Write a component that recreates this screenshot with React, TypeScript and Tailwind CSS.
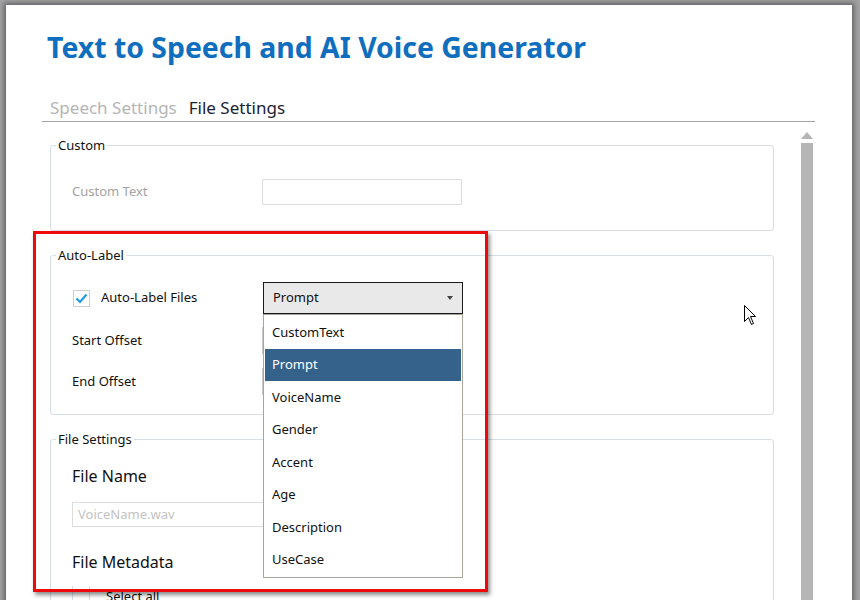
const items = ["CustomText", "Prompt", "VoiceName", "Gender", "Accent", "Age", "Description", "UseCase"];

function Group({ title, className, children }: { title: string; className?: string; children: React.ReactNode }) {
  return (
    <fieldset className={`w-[724px] rounded-[3px] border border-[#d6dee6] ${className ?? ""}`}>
      <legend className="ml-[5px] px-[2px] text-[13px] leading-[16px] text-[#111]">{title}</legend>
      {children}
    </fieldset>
  );
}

function Cursor() {
  return (
    <svg width="13" height="21" viewBox="0 0 13 21" className="absolute left-[744px] top-[305px]">
      <path d="M0.5 0.5 L0.5 16.5 L4.5 12.5 L7.5 19.5 L9.5 18.5 L6.5 11.5 L11.5 11.5 Z" fill="#fff" stroke="#000" strokeWidth="1" />
    </svg>
  );
}

export default function App() {
  return (
    <div className="relative h-[600px] w-[860px] overflow-hidden bg-[#a3a3a3]" style={{ fontFamily: '"Noto Sans", sans-serif' }}>
      <div className="ml-[6px] mt-[5px] h-[600px] w-[846px] overflow-hidden bg-white shadow-[0_0_5px_2px_rgba(40,40,50,0.55)]">
        <h1 className="pl-[41px] pt-[25px] text-[28.4px] font-bold leading-[34px] text-[#106ebe]">Text to Speech and AI Voice Generator</h1>

        <div className="mt-[32px] flex gap-[12px] pl-[44px] text-[17px] leading-[24px]">
          <span className="text-[#b5b5b5]">Speech Settings</span>
          <span className="text-[#1a2233]">File Settings</span>
        </div>
        <div className="ml-[36px] mt-[1px] h-px w-[773px] bg-[#a3a3a3]" />

        <div className="ml-[36px] flex">
          <div className="w-[732px] pl-[8px] pt-[15px]">
            <Group title="Custom">
              <div className="flex items-center pb-[25px] pl-[21px] pt-[26px]">
                <span className="w-[190px] text-[13px] text-[#a3a3a3]">Custom Text</span>
                <div className="h-[26px] w-[200px] border border-[#dddddd]" />
              </div>
            </Group>

            <Group title="Auto-Label" className="mt-[16px]">
              <div className="pb-[19px] pl-[22px] pt-[19px] text-[13px] text-[#111]">
                <div className="flex h-[32px] items-center">
                  <div className="flex h-[17px] w-[17px] items-center justify-center border border-[#cfcfcf]">
                    <svg width="13" height="11" viewBox="0 0 13 11">
                      <path d="M1.5 5.5 L5 9 L11.5 1.5" fill="none" stroke="#1c9be0" strokeWidth="2.2" />
                    </svg>
                  </div>
                  <span className="ml-[11px] w-[161px]">Auto-Label Files</span>
                  <div className="relative z-10 ml-[1px] h-[32px] w-[200px]">
                    <div className="flex h-full items-center justify-between border border-[#1a1a1a] bg-[#e9e9e9] pl-[9px] pr-[9px]">
                      <span>Prompt</span>
                      <svg width="6" height="4" viewBox="0 0 6 4"><path d="M0 0 L6 0 L3 4 Z" fill="#444" /></svg>
                    </div>
                    <div className="absolute left-0 top-full w-[200px] border border-[#aaa59b] bg-white p-[1px]">
                      {items.map((it) => (
                        <div
                          key={it}
                          className={`flex h-[32.5px] items-center pl-[7px] ${it === "Prompt" ? "bg-[#34628b] text-white" : "text-[#111]"}`}
                        >
                          {it}
                        </div>
                      ))}
                    </div>
                  </div>
                </div>
                <div className="mt-[13px] flex h-[27px] items-center">
                  <span className="ml-[-1px] w-[190px]">Start Offset</span>
                  <div className="h-[27px] w-[200px] border border-[#c8c8c8]" />
                </div>
                <div className="mt-[14px] flex h-[27px] items-center">
                  <span className="ml-[-1px] w-[190px]">End Offset</span>
                  <div className="h-[27px] w-[200px] border border-[#c8c8c8]" />
                </div>
              </div>
            </Group>

            <Group title="File Settings" className="mt-[16px] h-[200px]">
              <div className="pl-[21px] pt-[18px] text-[#111]">
                <div className="text-[16px] leading-[22px]">File Name</div>
                <div className="mt-[15px] flex h-[25px] w-[390px] items-center border border-[#dddddd] pl-[5px] text-[13px] text-[#c3c3c3]">
                  VoiceName.wav
                </div>
                <div className="mt-[24px] text-[16px] leading-[22px]">File Metadata</div>
                <div className="mt-[13px] flex h-[40px] w-[390px] border-l border-[#d6dee6]">
                  <div className="w-[17px] border-r border-[#d6dee6]" />
                  <span className="pl-[16px] pt-[1px] text-[13px]">Select all</span>
                </div>
              </div>
            </Group>
          </div>

          <div className="ml-[27px] flex w-[12px] flex-col items-center pt-[10px]">
            <svg width="12" height="7" viewBox="0 0 12 7"><path d="M6 0 L12 7 L0 7 Z" fill="#b5b5b5" /></svg>
            <div className="mt-[4px] h-[500px] w-[12px] bg-[#b5b5b5]" />
          </div>
        </div>
      </div>

      <div className="absolute left-[33px] top-[231px] h-[361px] w-[455px] border-[3px] border-[#ee0a0a] shadow-[2px_3px_4px_rgba(0,0,0,0.45)]" />
      <Cursor />
    </div>
  );
}
